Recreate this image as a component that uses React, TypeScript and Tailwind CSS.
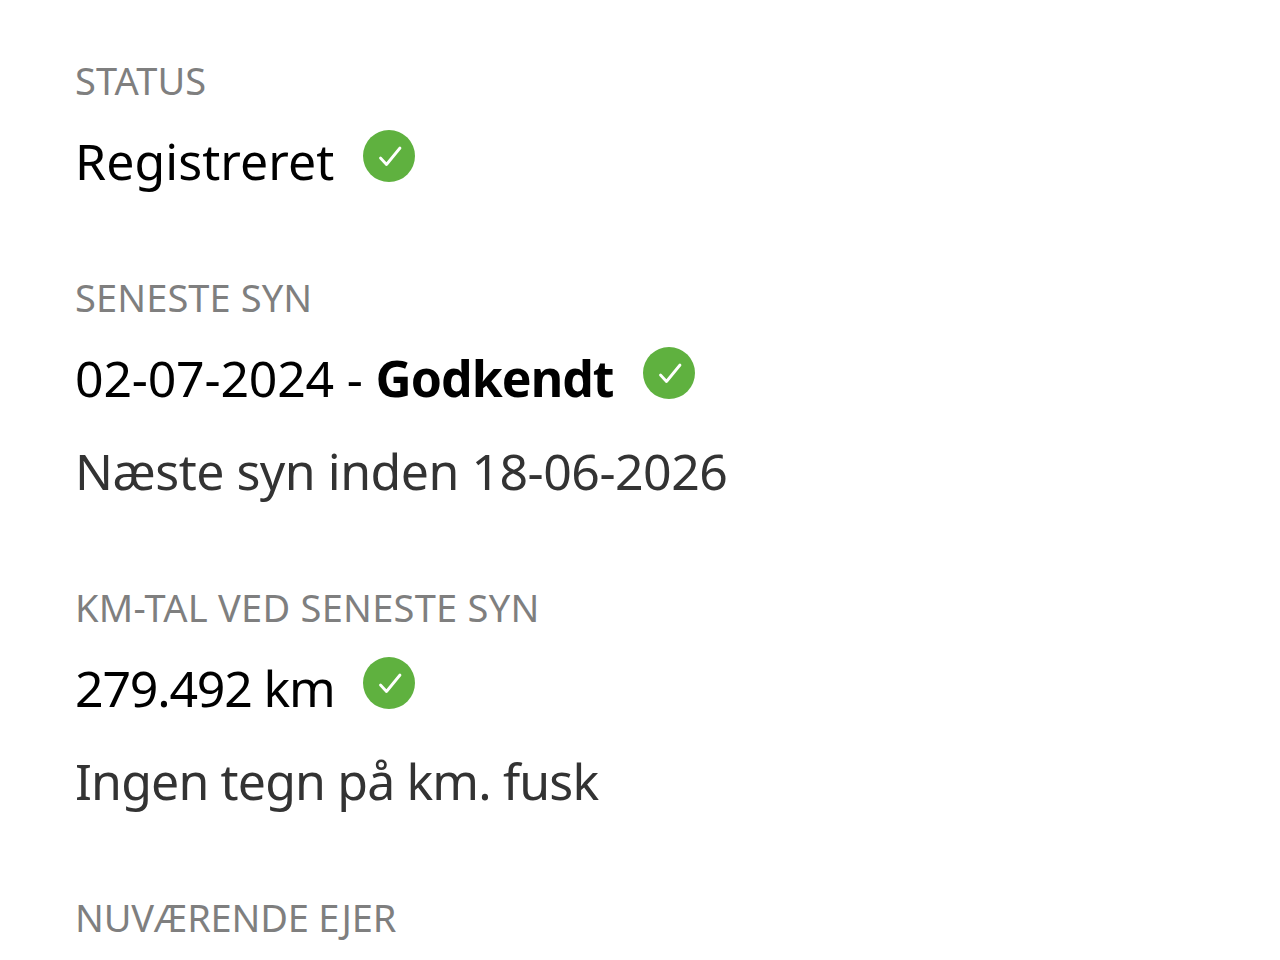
function Check() {
  return (
    <svg viewBox="0 0 52 52" className="w-[52px] h-[52px] ml-[29px] mb-[10px] shrink-0">
      <circle cx="26" cy="26" r="26" fill="#5fb13f" />
      <path d="M17.500 28l6 6.500L37 18" fill="none" stroke="#fff" strokeWidth="2.800" strokeLinecap="round" strokeLinejoin="round" />
    </svg>
  );
}

function Label({ className, children }: { className: string; children: React.ReactNode }) {
  return <div className={`text-[38px] leading-[44px] text-[#7f7f7f] ${className}`}>{children}</div>;
}

export default function App() {
  return (
    <div className="w-[1280px] h-[960px] overflow-hidden bg-white pl-[75px] pt-[58px] font-['Noto_Sans',sans-serif]">
      <Label className="tracking-[0.1px]">STATUS</Label>
      <div className="flex items-center h-[52px] mt-[33px] text-[50px] tracking-[0.05px] text-black">
        Registreret <Check />
      </div>

      <Label className="mt-[88px] tracking-[0.1px]">SENESTE SYN</Label>
      <div className="flex items-center h-[52px] mt-[33px] text-[50px] tracking-[-0.2px] text-black">
        <span>02-07-2024 - <b className="tracking-[-0.95px]">Godkendt</b></span> <Check />
      </div>
      <div className="mt-[32px] text-[50px] leading-[70px] tracking-[-0.5px] text-[#333]">Næste syn inden 18-06-2026</div>

      <Label className="mt-[79px] tracking-[0.25px]">KM-TAL VED SENESTE SYN</Label>
      <div className="flex items-center h-[52px] mt-[33px] text-[50px] tracking-[-1.2px] text-black">
        279.492 km <Check />
      </div>
      <div className="mt-[32px] text-[50px] leading-[70px] tracking-[-0.85px] text-[#333]">Ingen tegn på km. fusk</div>

      <Label className="mt-[79px] tracking-[-0.2px]">NUVÆRENDE EJER</Label>
    </div>
  );
}
